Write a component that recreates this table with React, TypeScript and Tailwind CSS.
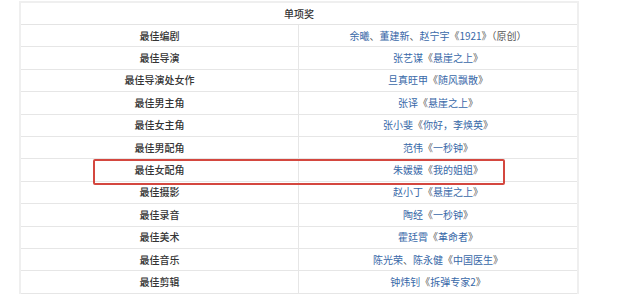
type Part = { t: string; link?: boolean };

const L = (t: string): Part => ({ t, link: true });
const P = (t: string): Part => ({ t });

const ROWS: { label: string; parts: Part[] }[] = [
  { label: '最佳编剧', parts: [L('余曦'), P('、'), L('董建新'), P('、'), L('赵宁宇'), P('《'), L('1921'), P('》（原创）')] },
  { label: '最佳导演', parts: [L('张艺谋'), P('《'), L('悬崖之上'), P('》')] },
  { label: '最佳导演处女作', parts: [L('旦真旺甲'), P('《'), L('随风飘散'), P('》')] },
  { label: '最佳男主角', parts: [L('张译'), P('《'), L('悬崖之上'), P('》')] },
  { label: '最佳女主角', parts: [L('张小斐'), P('《'), L('你好，李焕英'), P('》')] },
  { label: '最佳男配角', parts: [L('范伟'), P('《'), L('一秒钟'), P('》')] },
  { label: '最佳女配角', parts: [L('朱媛媛'), P('《'), L('我的姐姐'), P('》')] },
  { label: '最佳摄影', parts: [L('赵小丁'), P('《'), L('悬崖之上'), P('》')] },
  { label: '最佳录音', parts: [L('陶经'), P('《'), L('一秒钟'), P('》')] },
  { label: '最佳美术', parts: [L('霍廷霄'), P('《'), L('革命者'), P('》')] },
  { label: '最佳音乐', parts: [L('陈光荣'), P('、'), L('陈永健'), P('《'), L('中国医生'), P('》')] },
  { label: '最佳剪辑', parts: [L('钟炜钊'), P('《'), L('拆弹专家2'), P('》')] },
];

export default function App() {
  return (
    <div
      className="relative w-[640px] h-[297px] overflow-hidden bg-white pl-[19px] pt-[1px]"
      style={{ fontFamily: '"Noto Sans CJK SC", "Noto Sans", sans-serif' }}
    >
      <div className="w-[560px] border-l-2 border-r-2 border-t-2 border-[#efefef] text-[10px] leading-none">
        <div className="h-[22px] flex items-center justify-center border-b border-[#e4e4e4] text-[#333] font-medium">
          单项奖
        </div>
        {ROWS.map((r) => (
          <div key={r.label} className="grid grid-cols-[278px_1fr] h-[22.4px] border-b border-[#e6e6e6]">
            <div className="flex items-center justify-center border-r border-[#e6e6e6] text-[#333] font-medium">
              {r.label}
            </div>
            <div className="flex items-center justify-center text-[#555]">
              {r.parts.map((p, i) => (
                <span key={i} className={p.link ? 'text-[#3868a8]' : ''}>
                  {p.t}
                </span>
              ))}
            </div>
          </div>
        ))}
      </div>
      <div className="absolute left-[93px] top-[159px] w-[412px] h-[26px] border-2 border-[#d4473f] rounded-[2px]" />
    </div>
  );
}
